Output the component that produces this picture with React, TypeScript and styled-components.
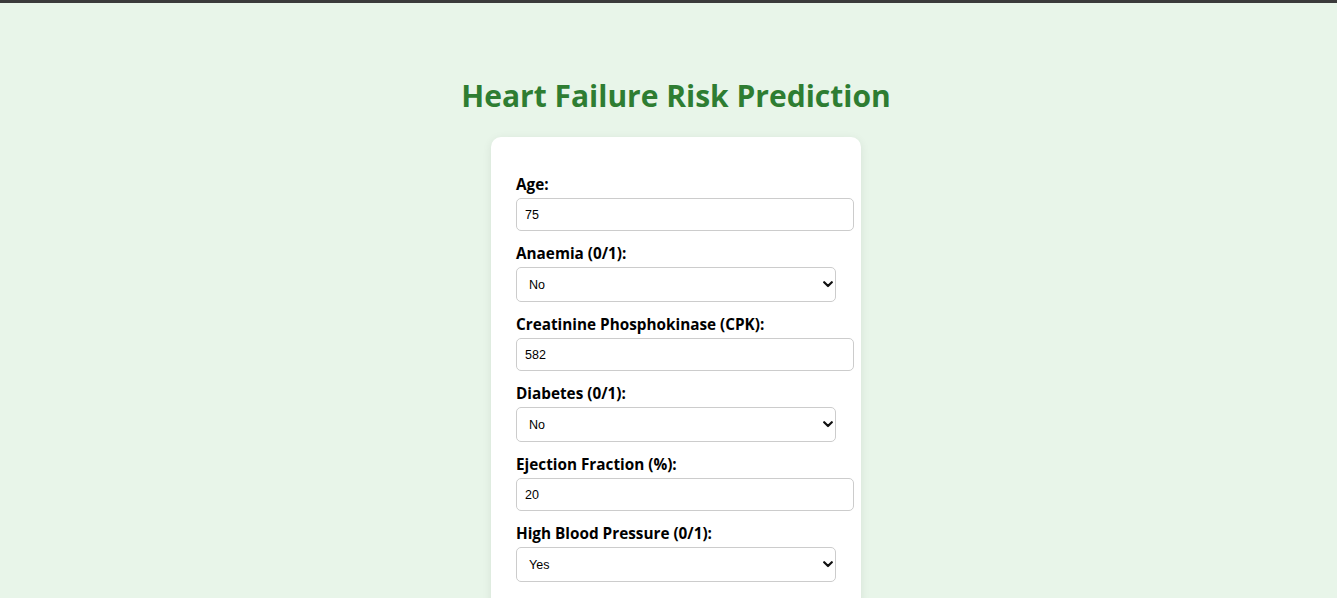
import React from 'react'
import styled, {createGlobalStyle} from 'styled-components'

const GlobalStyle = createGlobalStyle`
  body {
    margin: 0;
    background: #e8f5e9;
    font-family: "Open Sans", "Liberation Sans", sans-serif;
  }
`

const TopBar = styled.div`
  height: 3px;
  background: #3b3b3b;
`

const Page = styled.main`
  display: flex;
  flex-direction: column;
  align-items: center;
  padding-left: 15px;
`

const Title = styled.h1`
  margin: 73px 0 21px;
  font-size: 30px;
  line-height: 40px;
  font-weight: 700;
  color: #2e7d32;
`

const Card = styled.form`
  width: 320px;
  padding: 37px 25px 25px;
  background: white;
  border-radius: 10px;
  box-shadow: 0 2px 10px rgba(0, 0, 0, 0.08);
`

const Field = styled.div`
  display: flex;
  flex-direction: column;
  margin-bottom: 12px;
`

const Label = styled.label`
  font-size: 15.3px;
  line-height: 20px;
  font-weight: 700;
  color: #000;
  margin-bottom: 4px;
`

const Input = styled.input`
  box-sizing: content-box;
  width: 100%;
  height: 15px;
  padding: 8px;
  border: 1px solid #ccc;
  border-radius: 5px;
  font-family: "Liberation Sans", Arial, sans-serif;
  font-size: 12.5px;
  color: #000;
  background: white;
  outline: none;
`

const SelectWrap = styled.div`
  position: relative;
  width: 320px;

  > svg {
    position: absolute;
    right: 3px;
    top: 14px;
    pointer-events: none;
  }
`

const Select = styled.select`
  appearance: none;
  width: 100%;
  height: 35px;
  padding: 0 8px 0 12px;
  border: 1px solid #ccc;
  border-radius: 5px;
  font-family: "Liberation Sans", Arial, sans-serif;
  font-size: 12.5px;
  color: #000;
  background: white;
  outline: none;
`

const Chevron = () => (
  <svg width="10" height="7" viewBox="0 0 10 7">
    <path d="M1.2 1.2 L5 5 L8.8 1.2" fill="none" stroke="#111" strokeWidth="2.2" strokeLinecap="round" strokeLinejoin="round"/>
  </svg>
)

type FieldDef =
  | {label: string; kind: 'number'; value: string}
  | {label: string; kind: 'yesno'; value: '0' | '1'}

const fields: FieldDef[] = [
  {label: 'Age:', kind: 'number', value: '75'},
  {label: 'Anaemia (0/1):', kind: 'yesno', value: '0'},
  {label: 'Creatinine Phosphokinase (CPK):', kind: 'number', value: '582'},
  {label: 'Diabetes (0/1):', kind: 'yesno', value: '0'},
  {label: 'Ejection Fraction (%):', kind: 'number', value: '20'},
  {label: 'High Blood Pressure (0/1):', kind: 'yesno', value: '1'},
  {label: 'Platelets (kiloplatelets/mL):', kind: 'number', value: '265000'},
  {label: 'Serum Creatinine (mg/dL):', kind: 'number', value: '1.9'},
]

const App = () => {
  return (
    <>
      <GlobalStyle/>
      <TopBar/>
      <Page>
        <Title>Heart Failure Risk Prediction</Title>
        <Card onSubmit={(e) => e.preventDefault()}>
          {
            fields.map((f, i) =>
              <Field key={i}>
                <Label htmlFor={'f' + i}>{f.label}</Label>
                {f.kind === 'number'
                  ? <Input id={'f' + i} type="text" defaultValue={f.value}/>
                  : <SelectWrap>
                      <Select id={'f' + i} defaultValue={f.value}>
                        <option value="0">No</option>
                        <option value="1">Yes</option>
                      </Select>
                      <Chevron/>
                    </SelectWrap>
                }
              </Field>
            )
          }
        </Card>
      </Page>
    </>
  )
}

export default App
